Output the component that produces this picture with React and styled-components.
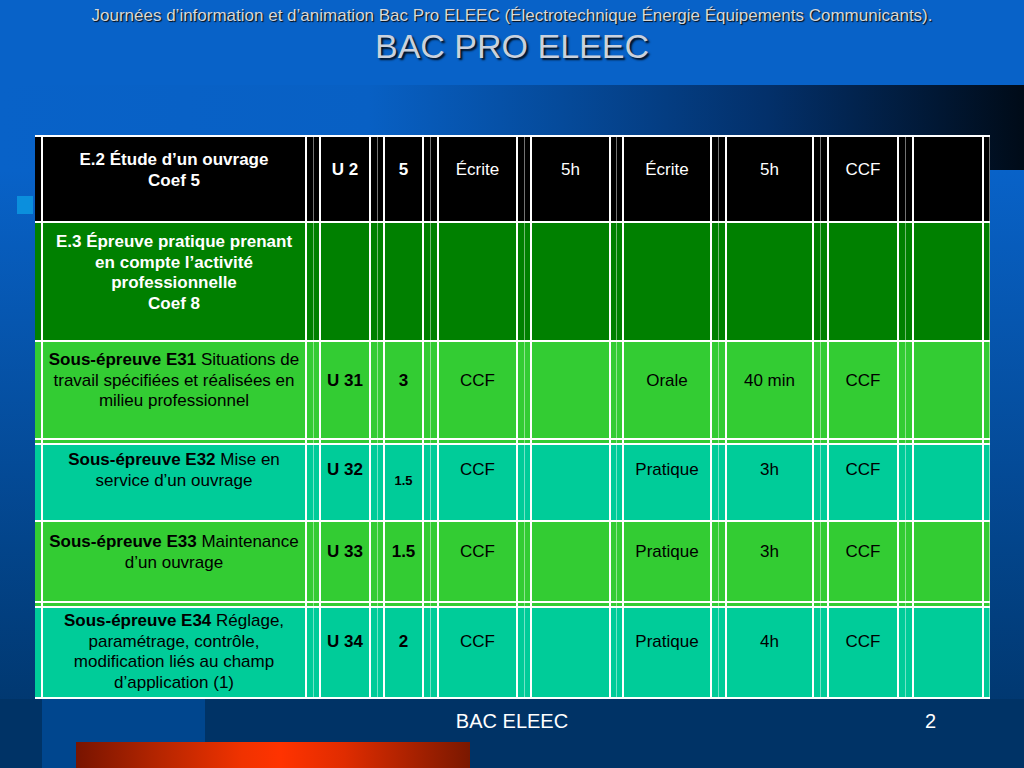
import React from 'react';
import styled, { createGlobalStyle, css } from 'styled-components';

const Global = createGlobalStyle`
  html, body { margin: 0; padding: 0; background: #003366; }
  #root { width: 1024px; height: 768px; }
`;

const COLS =
  '6px 266px 12px 52px 12px 41px 13px 81px 12px 81px 11px 90px 13px 89px 13px 72px 13px 72px 6px';

const Slide = styled.div`
  width: 1024px;
  height: 768px;
  overflow: hidden;
  display: flex;
  flex-direction: column;
  font-family: 'Liberation Sans', Arial, sans-serif;
  background:
    linear-gradient(#0b8fdd, #0b8fdd) 17px 196px / 16px 18px no-repeat,
    linear-gradient(90deg, #0862c8 0%, #0860c4 36%, #054a9a 55%, #03306a 75%, #000b18 100%) 0 85px / 100% 85px no-repeat,
    linear-gradient(180deg, #0862c8 0px, #0862c8 170px, #003366 100%);
`;

const Header = styled.header`
  height: 85px;
  box-sizing: border-box;
  padding-top: 6px;
  text-align: center;
`;

const Subtitle = styled.div`
  font-size: 17px;
  line-height: 20px;
  color: #d8d8d8;
  text-shadow: 1px 1px 1px #0a0a0a;
  white-space: nowrap;
`;

const Title = styled.h1`
  margin: 0;
  font-weight: 400;
  font-size: 34px;
  line-height: 40px;
  color: #c9d1dd;
  text-shadow: 2px 2px 2px rgba(0, 0, 0, 0.85);
`;

const Main = styled.main`
  padding: 50px 0 0 35px;
`;

const Table = styled.div`
  width: 955px;
  display: flex;
  flex-direction: column;
`;

const Row = styled.div`
  position: relative;
  display: grid;
  grid-template-columns: ${COLS};
  height: ${(p) => p.$h}px;
  box-sizing: border-box;
  border-top: 2px solid #fff;
  ${(p) => p.$last && 'border-bottom: 2px solid #fff;'}
  background: ${(p) => p.$bg};
  color: ${(p) => p.$fg};
  ${(p) =>
    p.$double &&
    css`
      &::after {
        content: '';
        position: absolute;
        left: 0;
        right: 0;
        bottom: 3px;
        height: 2px;
        background: #fff;
      }
    `}
`;

const Gap = styled.div`
  display: flex;
  justify-content: ${(p) => (p.$line === 'right' ? 'flex-end' : 'center')};
  &::before {
    content: '';
    width: 1px;
    background: ${(p) => (p.$line === 'none' ? 'transparent' : 'rgba(255,255,255,0.45)')};
  }
`;

const Cell = styled.div`
  box-sizing: border-box;
  border-left: 2px solid #fff;
  border-right: 2px solid #fff;
  padding: ${(p) => p.$pad}px 4px 0;
  text-align: center;
  font-size: ${(p) => (p.$small ? 13 : 17)}px;
  line-height: ${(p) => (p.$small ? 16 : 20.5)}px;
  font-weight: ${(p) => (p.$bold ? 700 : 400)};
`;

const Strong = styled.span`
  font-weight: 700;
`;

const Footer = styled.footer`
  flex: 1;
  display: flex;
  flex-direction: column;
  padding-top: 10px;
  background:
    linear-gradient(#00468e, #00468e) 42px 0 / 163px 100% no-repeat,
    #003366;
`;

const FooterRow = styled.div`
  display: grid;
  grid-template-columns: 1fr auto 1fr;
  font-size: 20px;
  line-height: 24px;
  color: #fff;
`;

const FooterCenter = styled.div`
  grid-column: 2;
`;

const PageNum = styled.div`
  text-align: right;
  padding-right: 88px;
`;

const RedBar = styled.div`
  margin: 9px 0 0 76px;
  width: 394px;
  height: 26px;
  background: linear-gradient(90deg, #781400 0%, #b82600 22%, #f03200 42%, #ff3300 52%, #e02c00 68%, #7a1800 100%);
`;

const rows = [
  {
    bg: '#000000',
    fg: '#ffffff',
    h: 86,
    pad: 13,
    other: 23,
    first: (
      <>
        E.2 Étude d’un ouvrage
        <br />
        Coef 5
      </>
    ),
    firstBold: true,
    cells: [
      { t: 'U 2', b: true },
      { t: '5', b: true },
      { t: 'Écrite' },
      { t: '5h' },
      { t: 'Écrite' },
      { t: '5h' },
      { t: 'CCF' },
      { t: '' },
    ],
  },
  {
    bg: '#008000',
    fg: '#ffffff',
    h: 119,
    pad: 9,
    other: 20,
    first: (
      <>
        E.3 Épreuve pratique prenant en compte l’activité professionnelle
        <br />
        Coef 8
      </>
    ),
    firstBold: true,
    cells: [{ t: '' }, { t: '' }, { t: '' }, { t: '' }, { t: '' }, { t: '' }, { t: '' }, { t: '' }],
  },
  {
    bg: '#33cc33',
    fg: '#000000',
    h: 103,
    pad: 8,
    other: 29,
    double: true,
    first: (
      <>
        <Strong>Sous-épreuve E31</Strong> Situations de travail spécifiées et réalisées en milieu professionnel
      </>
    ),
    cells: [
      { t: 'U 31', b: true },
      { t: '3', b: true },
      { t: 'CCF' },
      { t: '' },
      { t: 'Orale' },
      { t: '40 min' },
      { t: 'CCF' },
      { t: '' },
    ],
  },
  {
    bg: '#00cc99',
    fg: '#000000',
    h: 77,
    pad: 5,
    other: 15,
    first: (
      <>
        <Strong>Sous-épreuve E32</Strong> Mise en service d’un ouvrage
      </>
    ),
    cells: [
      { t: 'U 32', b: true },
      { t: '1.5', b: true, small: true, pad: 28 },
      { t: 'CCF' },
      { t: '' },
      { t: 'Pratique' },
      { t: '3h' },
      { t: 'CCF' },
      { t: '' },
    ],
  },
  {
    bg: '#33cc33',
    fg: '#000000',
    h: 86,
    pad: 10,
    other: 20,
    double: true,
    first: (
      <>
        <Strong>Sous-épreuve E33</Strong> Maintenance d’un ouvrage
      </>
    ),
    cells: [
      { t: 'U 33', b: true },
      { t: '1.5', b: true },
      { t: 'CCF' },
      { t: '' },
      { t: 'Pratique' },
      { t: '3h' },
      { t: 'CCF' },
      { t: '' },
    ],
  },
  {
    bg: '#00cc99',
    fg: '#000000',
    h: 93,
    pad: 3,
    other: 24,
    last: true,
    first: (
      <>
        <Strong>Sous-épreuve E34</Strong> Réglage, paramétrage, contrôle, modification liés au champ d’application (1)
      </>
    ),
    cells: [
      { t: 'U 34', b: true },
      { t: '2', b: true },
      { t: 'CCF' },
      { t: '' },
      { t: 'Pratique' },
      { t: '4h' },
      { t: 'CCF' },
      { t: '' },
    ],
  },
];

function TableRow({ row }) {
  const parts = [<Gap key="g0" $line="none" />];
  parts.push(
    <Cell key="c0" $pad={row.pad} $bold={row.firstBold}>
      {row.first}
    </Cell>
  );
  row.cells.forEach((c, i) => {
    parts.push(<Gap key={`g${i + 1}`} $line="center" />);
    parts.push(
      <Cell key={`c${i + 1}`} $pad={c.pad ?? row.other} $bold={c.b} $small={c.small}>
        {c.t}
      </Cell>
    );
  });
  parts.push(<Gap key="gend" $line="right" />);
  return (
    <Row $h={row.h} $bg={row.bg} $fg={row.fg} $double={row.double} $last={row.last}>
      {parts}
    </Row>
  );
}

export default function App() {
  return (
    <>
      <Global />
      <Slide>
        <Header>
          <Subtitle>
            Journées d’information et d’animation Bac Pro ELEEC (Électrotechnique Énergie Équipements Communicants).
          </Subtitle>
          <Title>BAC PRO ELEEC</Title>
        </Header>
        <Main>
          <Table>
            {rows.map((r, i) => (
              <TableRow key={i} row={r} />
            ))}
          </Table>
        </Main>
        <Footer>
          <FooterRow>
            <FooterCenter>BAC ELEEC</FooterCenter>
            <PageNum>2</PageNum>
          </FooterRow>
          <RedBar />
        </Footer>
      </Slide>
    </>
  );
}
